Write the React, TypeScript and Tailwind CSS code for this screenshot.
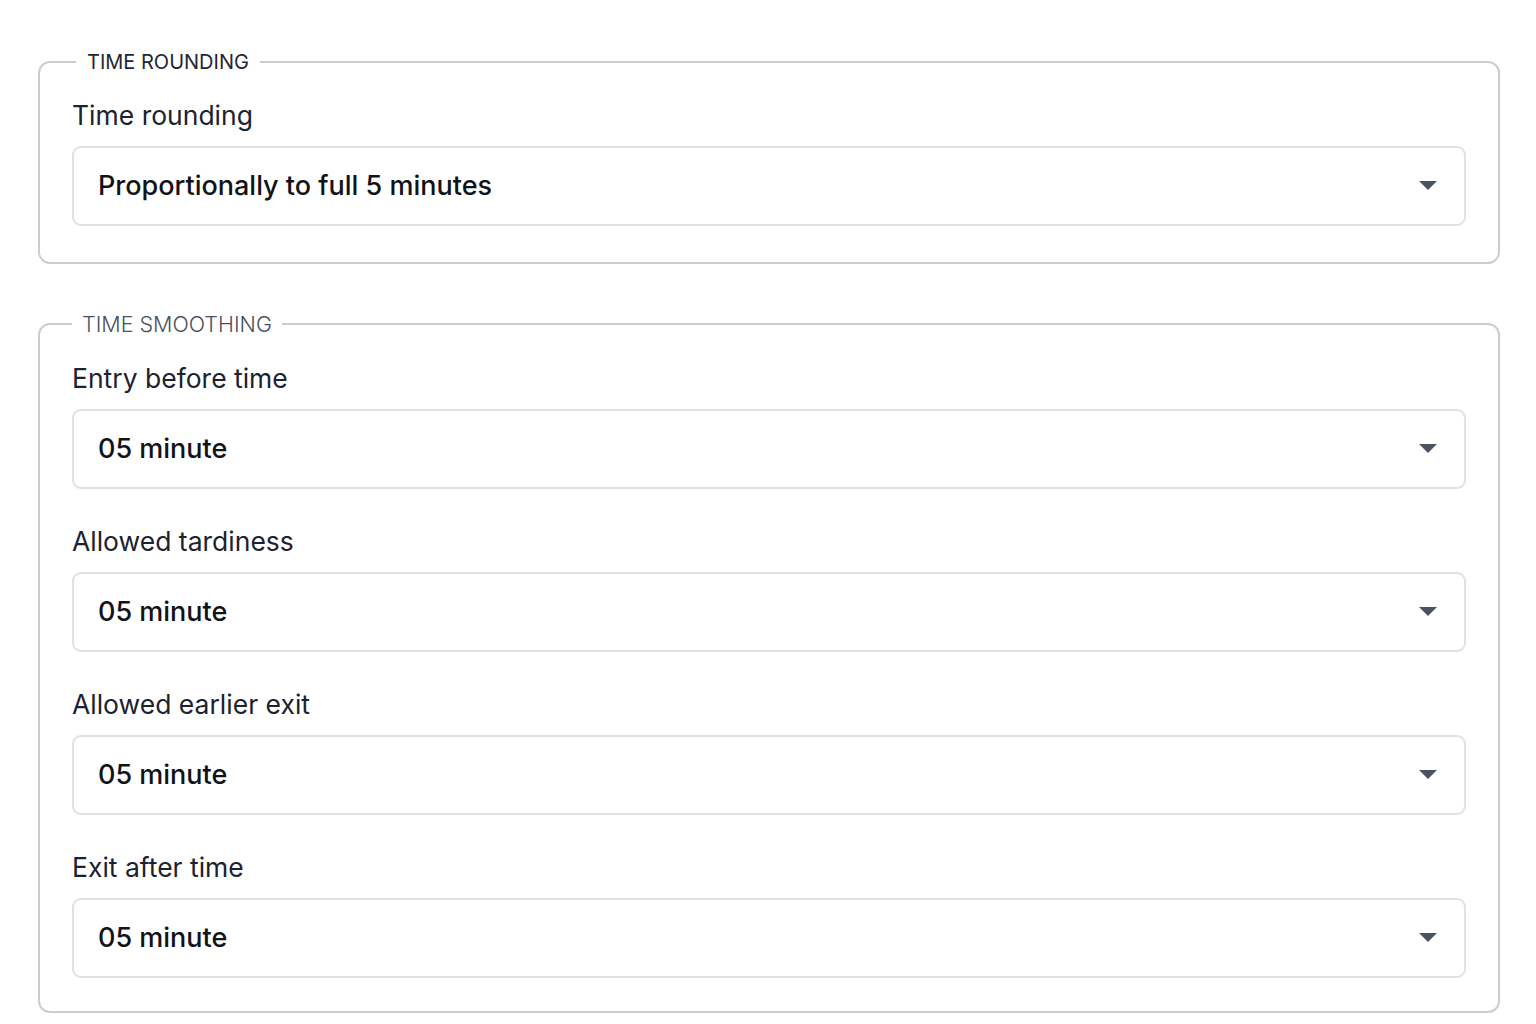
const smoothingFields = [
  { label: 'Entry before time', value: '05 minute' },
  { label: 'Allowed tardiness', value: '05 minute' },
  { label: 'Allowed earlier exit', value: '05 minute' },
  { label: 'Exit after time', value: '05 minute' },
];

const Caret = () => (
  <svg width="18" height="10" viewBox="0 0 18 10" className="shrink-0">
    <path d="M0 0 L18 0 L9 9 Z" fill="#4b5262" />
  </svg>
);

const SelectBox = ({ value }: { value: string }) => {
  return (
    <div className="flex h-[80px] w-full items-center justify-between rounded-[9px] border-2 border-[#dde2e7] bg-white pl-[24px] pr-[27px]">
      <span className="text-[27px] font-medium text-[#111318]">{value}</span>
      <Caret />
    </div>
  );
};

const Field = ({ label, value }: { label: string; value: string }) => {
  return (
    <div className="flex flex-col">
      <label className="h-[36px] text-[26.5px] leading-[36px] text-[#1c2230]">{label}</label>
      <div className="mt-[13px]">
        <SelectBox value={value} />
      </div>
    </div>
  );
};

const App = () => {
  return (
    <div
      className="min-h-screen bg-white pt-[48px] pl-[38px]"
      style={{ fontFamily: 'Inter, "Noto Sans", sans-serif' }}
    >
      <fieldset className="w-[1462px] rounded-[12px] border-2 border-[#cbcdd1] px-[32px] pt-[21px] pb-[36px]">
        <legend className="ml-[4px] px-[11px] text-[20px] leading-[28px] text-[#1f2633]">
          TIME ROUNDING
        </legend>
        <Field label="Time rounding" value="Proportionally to full 5 minutes" />
      </fieldset>

      <fieldset className="mt-[46px] w-[1462px] rounded-[12px] border-2 border-[#cbcdd1] px-[32px] pt-[22px] pb-[33px]">
        <legend className="px-[10px] text-[21.5px] font-light leading-[28px] text-[#4a5160]">
          TIME SMOOTHING
        </legend>
        <div className="flex flex-col gap-[34px]">
          {smoothingFields.map((field, key) => (
            <Field key={key} label={field.label} value={field.value} />
          ))}
        </div>
      </fieldset>
    </div>
  );
};

export default App;
